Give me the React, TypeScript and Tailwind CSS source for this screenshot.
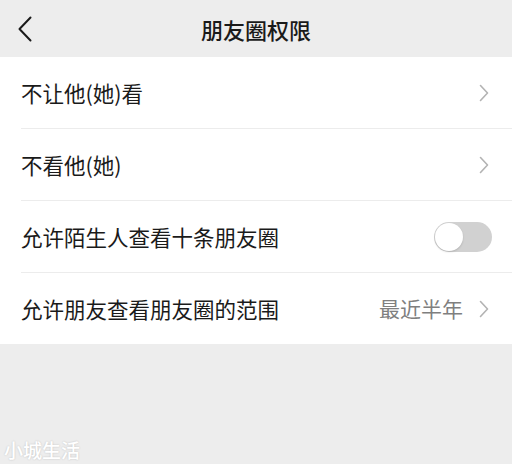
import { useState } from "react";

const ChevronRight = () => (
  <svg width="10" height="18" viewBox="0 0 10 18" fill="none">
    <path d="M1.5 1.5L8.5 9L1.5 16.5" stroke="#b3b3b3" strokeWidth="1.6" strokeLinecap="round" strokeLinejoin="round" />
  </svg>
);

const BackArrow = () => (
  <svg width="14" height="26" viewBox="0 0 14 26" fill="none">
    <path d="M12.5 1.5L1.5 13L12.5 24.5" stroke="#1a1a1a" strokeWidth="2" strokeLinecap="round" strokeLinejoin="round" />
  </svg>
);

const Toggle = ({ on, onClick }: { on: boolean; onClick: () => void }) => (
  <button
    onClick={onClick}
    className={`w-[58px] h-[30px] rounded-full p-[1px] flex items-center ${on ? "bg-[#07c160] justify-end" : "bg-[#d1d1d1] justify-start"}`}
  >
    <span className="w-[28px] h-[28px] rounded-full bg-white shadow-[0_1px_2px_rgba(0,0,0,0.15)]" />
  </button>
);

const App = () => {
  const [strangers, setStrangers] = useState(false);

  const rows = [
    { label: "不让他(她)看" },
    { label: "不看他(她)" },
    { label: "允许陌生人查看十条朋友圈", toggle: true },
    { label: "允许朋友查看朋友圈的范围", value: "最近半年" },
  ];

  return (
    <div className="w-[512px] h-[464px] bg-[#ededed] relative overflow-hidden font-['Noto_Sans_CJK_SC','Noto_Sans',sans-serif] text-[#1a1a1a]">
      <div className="h-[57px] grid grid-cols-[1fr_auto_1fr] items-center">
        <div className="pl-[18px] flex items-center">
          <BackArrow />
        </div>
        <p className="text-[22px] font-medium leading-none">朋友圈权限</p>
        <div />
      </div>

      <div className="bg-white">
        {rows.map((row, i) => (
          <div key={row.label} className="pl-[21px] cursor-pointer">
            <div
              className={`flex items-center ${row.toggle ? "pr-[20px]" : "pr-[23px]"} ${i < rows.length - 1 ? "h-[72px] border-b border-[#ececec]" : "h-[71px]"}`}
            >
              <span className="flex-1 text-[21.5px] leading-none">{row.label}</span>
              {row.toggle ? (
                <Toggle on={strangers} onClick={() => setStrangers(!strangers)} />
              ) : (
                <div className="flex items-center gap-[16px]">
                  {row.value && <span className="text-[21px] leading-none text-[#7f7f7f]">{row.value}</span>}
                  <ChevronRight />
                </div>
              )}
            </div>
          </div>
        ))}
      </div>

      <p className="absolute left-[4px] bottom-[5px] text-[19px] font-medium leading-none text-white [text-shadow:0_0_2px_rgba(0,0,0,0.2)]">
        小城生活
      </p>
    </div>
  );
};

export default App;
